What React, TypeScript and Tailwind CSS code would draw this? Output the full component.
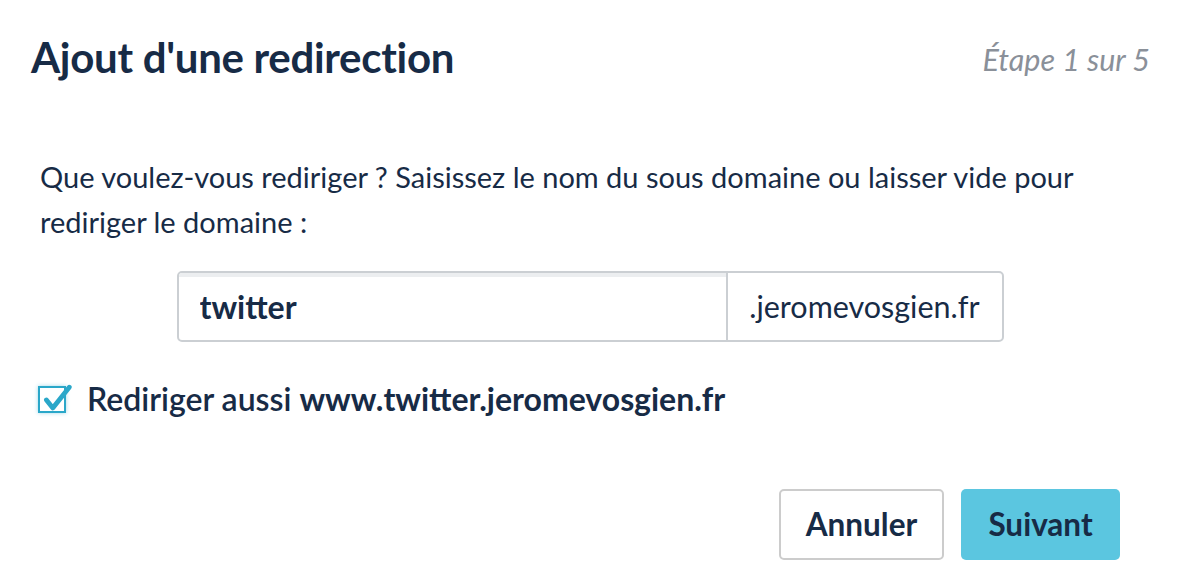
import { useState } from 'react';

export default function App() {
  const [sub, setSub] = useState('twitter');
  const [www, setWww] = useState(true);

  return (
    <div
      className="w-[1186px] h-[588px] bg-white text-[#172b46] overflow-hidden"
      style={{ fontFamily: 'Lato, "Noto Sans", sans-serif' }}
    >
      <div className="flex items-start justify-between pl-[31px] pr-[36px] pt-[31px]">
        <h1 className="text-[42px] leading-[52px] font-bold tracking-[-0.3px]">Ajout d'une redirection</h1>
        <span className="text-[30.5px] leading-[40px] italic text-[#8a9099] pt-[8px]">Étape 1 sur 5</span>
      </div>

      <p className="pl-[40px] pr-[40px] mt-[71px] text-[29px] leading-[45px]">
        Que voulez-vous rediriger ? Saisissez le nom du sous domaine ou laisser vide pour rediriger le domaine :
      </p>

      <div className="flex justify-center mt-[27px] pr-[6px]">
        <div className="flex w-[827px] h-[71px] border-2 border-[#cbcfd3] rounded-[5px] overflow-hidden">
          <input
            value={sub}
            onChange={(e) => setSub(e.target.value)}
            className="flex-1 min-w-0 px-[21px] text-[32px] font-bold text-[#172b46] outline-none shadow-[inset_0_4px_0_#eceef0]"
          />
          <div className="flex items-center pl-[21px] pr-[22px] border-l-2 border-[#cbcfd3] text-[30.5px]">.jeromevosgien.fr</div>
        </div>
      </div>

      <label className="flex items-center gap-[21px] pl-[38px] mt-[37px] cursor-pointer">
        <span
          onClick={() => setWww(!www)}
          className="relative w-[28px] h-[27px] border-[2.5px] border-[#2aa7c9] bg-white shadow-[0_0_4px_rgba(42,167,201,0.45)]"
        >
          {www && (
            <svg viewBox="0 0 32 32" className="absolute left-[-1px] top-[-4px] w-[34px] h-[34px]">
              <path d="M7 15 L13 22.5 L28.5 3" fill="none" stroke="#2aa7c9" strokeWidth="4.5" strokeLinecap="round" strokeLinejoin="round" />
            </svg>
          )}
        </span>
        <span className="text-[32px] leading-[40px] font-semibold">
          Rediriger aussi <b className="font-bold">www.{sub}{sub ? '.' : ''}jeromevosgien.fr</b>
        </span>
      </label>

      <div className="flex justify-end gap-[17px] pr-[66px] mt-[70px]">
        <button className="w-[165px] h-[71px] border-2 border-[#cccccc] rounded-[5px] bg-white text-[31.5px] font-bold">
          Annuler
        </button>
        <button className="w-[159px] h-[71px] rounded-[5px] bg-[#5bc6e0] text-[31.5px] font-bold">
          Suivant
        </button>
      </div>
    </div>
  );
}
